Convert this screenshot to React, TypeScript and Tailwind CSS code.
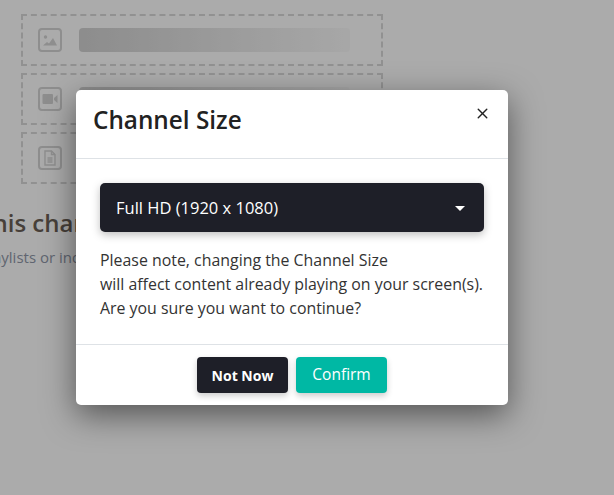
import { X } from "lucide-react";

function Row({ icon, bar }: { icon: React.ReactNode; bar?: boolean }) {
  return (
    <div className="flex h-[52px] items-center gap-[17px] border-2 border-dashed border-[#d9d9d9] pl-[15px] pr-[31px]">
      <div className="flex h-6 w-6 shrink-0 items-center justify-center rounded-[4px] border-2 border-[#d4d4d4]">
        {icon}
      </div>
      {bar && <div className="h-6 flex-1 rounded-[4px] bg-gradient-to-r from-[#d2d2d2] to-[#fafafa]" />}
    </div>
  );
}

export default function App() {
  return (
    <div className="relative h-[495px] w-[614px] overflow-hidden bg-white font-['Open_Sans',sans-serif]">
      {/* PAGE BEHIND */}
      <div className="flex flex-col">
        <div className="ml-[21px] mt-[14px] flex w-[362px] flex-col gap-[7px]">
          <Row
            bar
            icon={
              <svg viewBox="0 0 16 16" className="h-[16px] w-[16px] fill-[#d4d4d4]">
                <circle cx="3.5" cy="5" r="1.7" />
                <path d="M1 13.5l4-3.5 2 1.5 4-5.5 4 7.5z" />
              </svg>
            }
          />
          <Row
            bar
            icon={
              <svg viewBox="0 0 16 16" className="h-[16px] w-[16px] fill-[#d4d4d4]">
                <rect x="0.5" y="3" width="10.5" height="10" rx="1" />
                <path d="M12 7l3.5-3v8l-3.500-3z" />
              </svg>
            }
          />
          <Row
            icon={
              <svg viewBox="0 0 16 16" className="h-[16px] w-[16px] fill-none stroke-[#d4d4d4]" strokeWidth="1.4">
                <path d="M3 1h6.500l3.500 3.500V15H3z" />
                <path d="M9.500 1v3.500H13" />
                <path d="M5.500 8h5M5.500 10h5M5.500 12h5" />
              </svg>
            }
          />
        </div>
        <div className="-ml-[17px] mt-[24px] whitespace-nowrap text-[24px] font-semibold leading-[30px] text-[#6b5f55]">
          this channel
        </div>
        <div className="-ml-[20px] mt-[9px] whitespace-nowrap text-[15px] leading-5 text-[#8f97a8]">
          playlists or individual
        </div>
      </div>

      {/* OVERLAY */}
      <div className="absolute inset-0 bg-black/33" />

      {/* MODAL */}
      <div className="absolute left-[76px] top-[90px] w-[432px] rounded-[5px] bg-white text-[#212529] shadow-[0_10px_32px_rgba(0,0,0,0.5)]">
        <div className="flex h-[69px] items-start justify-between border-b border-[#dee2e6] pl-[17px] pr-[17px] pt-[14px]">
          <h2 className="text-[24.3px] font-semibold leading-[32px] text-[#222]">Channel Size</h2>
          <X className="mt-[1px] h-[17px] w-[17px] text-[#222]" strokeWidth={2} />
        </div>
        <div className="h-[186px] border-b border-[#dee2e6] px-6 pt-6">
          <div className="flex h-[49px] items-center justify-between rounded-[5px] bg-[#1e1f28] pl-4 pr-[19px] pt-[2px] text-[16.500px] text-white shadow-[0_3px_8px_rgba(0,0,0,0.25)]">
            <span>Full HD (1920 x 1080)</span>
            <span className="h-0 w-0 border-x-[5.5px] border-t-[5.5px] border-x-transparent border-t-white" />
          </div>
          <p className="mt-[16px] whitespace-nowrap text-[15.9px] leading-6 text-[#333]">
            Please note, changing the Channel Size
            <br />
            will affect content already playing on your screen(s).
            <br />
            Are you sure you want to continue?
          </p>
        </div>
        <div className="flex h-[60px] items-start justify-center gap-2 pt-3">
          <button className="h-9 w-[91px] rounded-[4px] bg-[#1e1f28] text-[14px] font-bold text-white shadow-[0_3px_6px_rgba(0,0,0,0.2)]">
            Not Now
          </button>
          <button className="h-9 w-[91px] rounded-[4px] bg-[#00b8a4] text-[15.5px] text-white shadow-[0_3px_6px_rgba(0,0,0,0.2)]">
            Confirm
          </button>
        </div>
      </div>
    </div>
  );
}
